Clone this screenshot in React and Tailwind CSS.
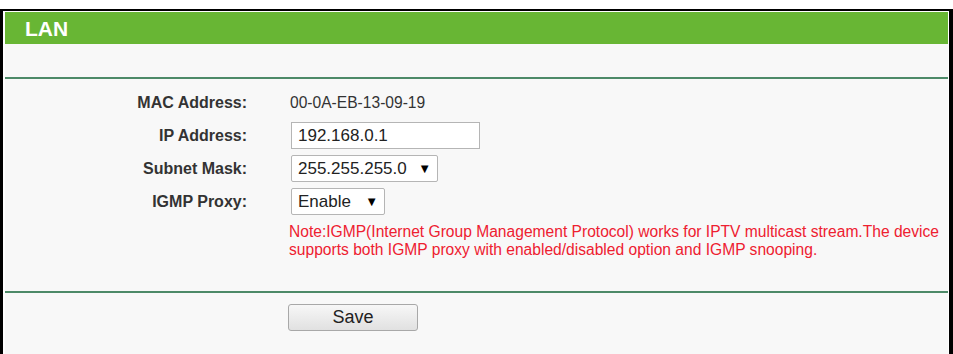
export default function App() {
  const font = { fontFamily: '"Liberation Sans", Arial, sans-serif' };
  return (
    <div className="w-[953px] h-[354px] bg-white overflow-hidden" style={font}>
      <div className="mt-[9px] h-[345px] border-t-2 border-l-[3px] border-r-[4px] border-black bg-white pl-[2px] pr-[1px] pt-[1px] flex flex-col">
        <div className="h-[32px] shrink-0 bg-[#68b634] flex items-center pl-[20px]">
          <span className="text-white font-bold text-[21px] leading-none">LAN</span>
        </div>
        <div className="flex-1 bg-[#f8f8f8] flex flex-col">
          <div className="h-[33px] shrink-0" />
          <div className="h-[2px] shrink-0 bg-[#4d8a68]" />
          <div className="pt-[10px] flex flex-col gap-[6px] text-[#333]">
            <div className="flex items-center h-[27px]">
              <div className="w-[242px] text-right font-bold text-[16px]">MAC Address:</div>
              <div className="ml-[43px] text-[15.6px]">00-0A-EB-13-09-19</div>
            </div>
            <div className="flex items-center h-[27px]">
              <div className="w-[242px] text-right font-bold text-[16px]">IP Address:</div>
              <div className="ml-[44px] w-[189px] h-[27px] bg-white border border-[#b5b5b5] flex items-center pl-[6px] text-[17px] text-[#222]">192.168.0.1</div>
            </div>
            <div className="flex items-center h-[27px]">
              <div className="w-[242px] text-right font-bold text-[16px]">Subnet Mask:</div>
              <div className="ml-[44px] w-[147px] h-[27px] bg-white border border-[#b5b5b5] rounded-[2px] flex items-center pl-[6px] text-[17px] text-[#222]">
                <span>255.255.255.0</span>
                <span className="ml-auto mr-[6px] text-[13px] text-black">▼</span>
              </div>
            </div>
            <div className="flex items-center h-[27px]">
              <div className="w-[242px] text-right font-bold text-[16px]">IGMP Proxy:</div>
              <div className="ml-[44px] w-[94px] h-[27px] bg-white border border-[#b5b5b5] rounded-[2px] flex items-center pl-[6px] text-[17px] text-[#222]">
                <span>Enable</span>
                <span className="ml-auto mr-[6px] text-[13px] text-black">▼</span>
              </div>
            </div>
            <div className="ml-[284px] text-[15.6px] leading-[18px] text-[#ee2030] whitespace-nowrap pt-[2px]">
              Note:IGMP(Internet Group Management Protocol) works for IPTV multicast stream.The device
              <br />
              supports both IGMP proxy with enabled/disabled option and IGMP snooping.
            </div>
          </div>
          <div className="h-[32px] shrink-0" />
          <div className="h-[2px] shrink-0 bg-[#4d8a68]" />
          <div className="pt-[11px] pl-[283px]">
            <button className="w-[130px] h-[27px] border border-[#a8a8a8] rounded-[3px] bg-gradient-to-b from-[#f7f7f7] to-[#e1e1e1] text-[18px] text-[#222] flex items-center justify-center">
              Save
            </button>
          </div>
        </div>
      </div>
    </div>
  );
}
